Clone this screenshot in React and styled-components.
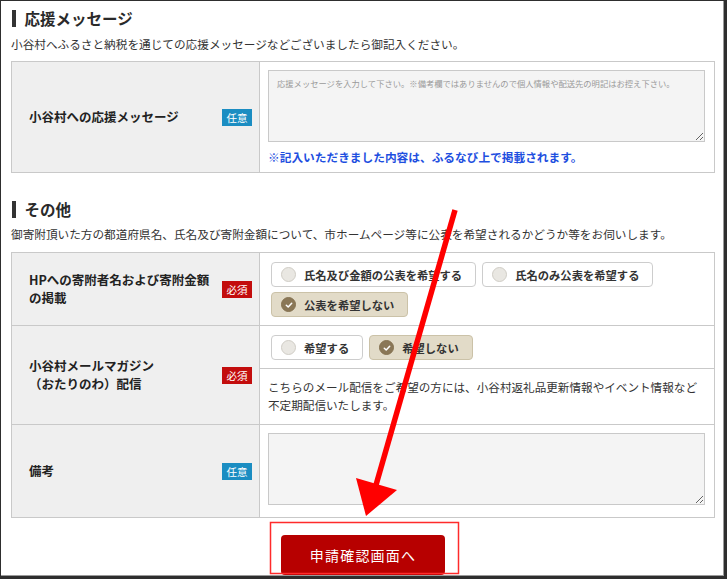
import React from 'react'
import styled, { createGlobalStyle } from 'styled-components'

const GlobalStyle = createGlobalStyle`
    html, body {
        margin: 0;
        padding: 0;
        background: #fff;
    }
    body {
        font-family: "Noto Sans CJK JP", "Noto Sans", sans-serif;
        color: #333;
    }
`

const Frame = styled.div`
    position: relative;
    box-sizing: border-box;
    width: 727px;
    height: 579px;
    border-style: solid;
    border-color: #2e2e2e;
    border-width: 1px 3px 3px 1px;
    box-shadow: inset -1px -1px 0 #9a9a9a;
    overflow: hidden;
    background: #fff;
`

const Content = styled.div`
    width: 704px;
    margin-left: 10px;
`

const Heading = styled.h2`
    display: flex;
    align-items: center;
    gap: 9px;
    height: 20px;
    margin: ${ ({ $top }) => $top }px 0 0 1px;
    font-size: 15.5px;
    font-weight: bold;
    color: #2a2a2a;
    &::before {
        content: '';
        display: block;
        width: 3.5px;
        height: 17px;
        background: #333;
    }
`

const Lead = styled.p`
    margin: ${ ({ $top }) => $top }px 0 0;
    font-size: 11.65px;
    line-height: 18px;
    color: #333;
    white-space: nowrap;
`

const Table = styled.div`
    margin-top: ${ ({ $top }) => $top }px;
    border: 1px solid #c9c9c9;
`

const Row = styled.div`
    display: grid;
    grid-template-columns: 248px 1fr;
    & + & {
        border-top: 1px solid #c9c9c9;
    }
`

const LabelCell = styled.div`
    display: flex;
    align-items: center;
    justify-content: space-between;
    padding: 0 7px 0 17px;
    background: #efefef;
    border-right: 1px solid #c9c9c9;
`

const LabelText = styled.span`
    font-size: 12.5px;
    font-weight: bold;
    line-height: 18.5px;
    color: #222;
`

const Badge = styled.span`
    display: inline-flex;
    align-items: center;
    justify-content: center;
    width: 30px;
    height: 17px;
    font-size: 10.5px;
    color: #fff;
    background: ${ ({ $required }) => $required ? '#c30d0d' : '#1b8dc2' };
`

const FieldCell = styled.div`
    padding: ${ ({ $pad }) => $pad };
`

const Textarea = styled.textarea`
    display: block;
    box-sizing: border-box;
    width: 100%;
    height: 72px;
    margin: 0;
    padding: 6px 8px;
    background: #f4f4f4;
    border: 1px solid #c9c9c9;
    border-radius: 0;
    font-family: inherit;
    font-size: 8.3px;
    resize: vertical;
    &::placeholder {
        color: #9a9a9a;
    }
`

const Note = styled.p`
    margin: 6px 0 0;
    font-size: 11.7px;
    font-weight: bold;
    line-height: 18px;
    color: #1e4fe0;
`

const ChoiceGroup = styled.div`
    display: flex;
    flex-wrap: wrap;
    gap: 5px 6px;
    padding: ${ ({ $pad }) => $pad };
`

const Choice = styled.label`
    display: inline-flex;
    align-items: center;
    gap: 8px;
    box-sizing: border-box;
    height: 25px;
    padding: 0 13px 0 9px;
    border: 1px solid ${ ({ $checked }) => $checked ? '#cbc2a8' : '#cdcdcd' };
    border-radius: 4px;
    background: ${ ({ $checked }) => $checked ? '#e2dbc8' : '#fff' };
    font-size: 11.3px;
    font-weight: bold;
    color: #333;
    white-space: nowrap;
`

const Dot = styled.span`
    display: inline-flex;
    align-items: center;
    justify-content: center;
    box-sizing: border-box;
    width: 15px;
    height: 15px;
    border-radius: 50%;
    border: 1px solid ${ ({ $checked }) => $checked ? '#857251' : '#d0cdc6' };
    background: ${ ({ $checked }) => $checked ? '#8a7757' : '#e9e7e2' };
`

const Divided = styled.div`
    border-top: 1px solid #c9c9c9;
    padding: 9px 8px 10px;
    font-size: 11.6px;
    line-height: 18px;
    color: #333;
`

const Actions = styled.div`
    display: flex;
    justify-content: center;
    margin-top: 17px;
`

const SubmitButton = styled.button`
    width: 164px;
    height: 40px;
    border: none;
    border-radius: 4px;
    background: #b70000;
    color: #fff;
    font-family: inherit;
    font-size: 14px;
    letter-spacing: 1.2px;
    cursor: pointer;
`

const Overlay = styled.svg`
    position: absolute;
    left: -1px;
    top: -1px;
    pointer-events: none;
`

const Check = () => (
    <svg width="8" height="8" viewBox="0 0 8 8">
        <path d="M1.3 4.2 L3.2 6 L6.7 2.2" fill="none" stroke="#fff" strokeWidth="1.5" strokeLinecap="round" strokeLinejoin="round" />
    </svg>
)

const Radio = ({ checked, children }) => (
    <Choice $checked={ checked }>
        <Dot $checked={ checked }>{ checked && <Check /> }</Dot>
        { children }
    </Choice>
)

export default function App() {
    return (
        <>
            <GlobalStyle />
            <Frame>
                <Content>
                    <Heading $top={ 7 }>応援メッセージ</Heading>
                    <Lead $top={ 7 }>小谷村へふるさと納税を通じての応援メッセージなどございましたら御記入ください。</Lead>
                    <Table $top={ 8 }>
                        <Row>
                            <LabelCell>
                                <LabelText>小谷村への応援メッセージ</LabelText>
                                <Badge>任意</Badge>
                            </LabelCell>
                            <FieldCell $pad="8px 9px 6px 8px">
                                <Textarea placeholder="応援メッセージを入力して下さい。※備考欄ではありませんので個人情報や配送先の明記はお控え下さい。" />
                                <Note>※記入いただきました内容は、ふるなび上で掲載されます。</Note>
                            </FieldCell>
                        </Row>
                    </Table>

                    <Heading $top={ 26 }>その他</Heading>
                    <Lead $top={ 6 }>御寄附頂いた方の都道府県名、氏名及び寄附金額について、市ホームページ等に公表を希望されるかどうか等をお伺いします。</Lead>
                    <Table $top={ 9 }>
                        <Row>
                            <LabelCell>
                                <LabelText>HPへの寄附者名および寄附金額<br />の掲載</LabelText>
                                <Badge $required>必須</Badge>
                            </LabelCell>
                            <ChoiceGroup $pad="9px 11px 8px">
                                <Radio>氏名及び金額の公表を希望する</Radio>
                                <Radio>氏名のみ公表を希望する</Radio>
                                <Radio checked>公表を希望しない</Radio>
                            </ChoiceGroup>
                        </Row>
                        <Row>
                            <LabelCell>
                                <LabelText>小谷村メールマガジン<br />（おたりのわ）配信</LabelText>
                                <Badge $required>必須</Badge>
                            </LabelCell>
                            <div>
                                <ChoiceGroup $pad="9px 11px 8px">
                                    <Radio>希望する</Radio>
                                    <Radio checked>希望しない</Radio>
                                </ChoiceGroup>
                                <Divided>
                                    こちらのメール配信をご希望の方には、小谷村返礼品更新情報やイベント情報など<br />
                                    不定期配信いたします。
                                </Divided>
                            </div>
                        </Row>
                        <Row>
                            <LabelCell>
                                <LabelText>備考</LabelText>
                                <Badge>任意</Badge>
                            </LabelCell>
                            <FieldCell $pad="8px 9px 12px 8px">
                                <Textarea />
                            </FieldCell>
                        </Row>
                    </Table>

                    <Actions>
                        <SubmitButton type="button">申請確認画面へ</SubmitButton>
                    </Actions>
                </Content>

                <Overlay width="728" height="580" viewBox="0 0 728 580">
                    <rect x="270.5" y="522.5" width="188" height="51" fill="none" stroke="#ff2b2b" strokeWidth="1.5" />
                    <line x1="455" y1="210" x2="376" y2="485" stroke="#ff0000" strokeWidth="5.5" />
                    <polygon points="356,478 397,490 366,516" fill="#ff0000" />
                </Overlay>
            </Frame>
        </>
    )
}
